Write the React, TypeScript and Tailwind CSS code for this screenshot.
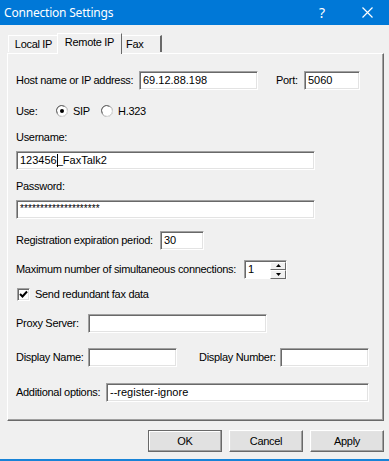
import React from "react";

const font = { fontFamily: '"Liberation Sans", Arial, sans-serif' };

function Field({ w, children, className = "" }: { w: string; children?: React.ReactNode; className?: string }) {
  return (
    <div
      className={`${w} shrink-0 h-[19px] bg-white border border-t-[#a0a0a0] border-l-[#a0a0a0] border-r-white border-b-white shadow-[inset_1px_1px_0_#696969,inset_-1px_-1px_0_#e3e3e3] flex items-center pl-[3px] text-[11px] text-black leading-none whitespace-nowrap overflow-hidden ${className}`}
    >
      {children}
    </div>
  );
}

function Label({ w, children, className = "" }: { w: string; children: React.ReactNode; className?: string }) {
  return <span className={`${w} shrink-0 whitespace-nowrap tracking-[-0.3px] ${className}`}>{children}</span>;
}

function Radio({ checked }: { checked?: boolean }) {
  return (
    <svg width="12" height="12" viewBox="0 0 12 12" className="shrink-0">
      <circle cx="6" cy="6" r="5.5" fill="#fff" stroke="#a0a0a0" />
      <path d="M1.5 8.5 A5 5 0 0 1 8.5 1.5" fill="none" stroke="#696969" strokeWidth="1" />
      <path d="M10.5 3.5 A5 5 0 0 1 3.5 10.5" fill="none" stroke="#e3e3e3" strokeWidth="1" />
      {checked && <circle cx="6" cy="6" r="2" fill="#000" />}
    </svg>
  );
}

function Button({ label, def }: { label: string; def?: boolean }) {
  return (
    <div
      className={`w-[74px] h-[22px] flex items-center justify-center text-[11px] text-black bg-[#e1e1e1] border ${
        def
          ? "border-[#696969] shadow-[inset_-1px_-1px_0_#a0a0a0,inset_1px_1px_0_#fff]"
          : "border-t-white border-l-white border-r-[#696969] border-b-[#696969] shadow-[inset_-1px_-1px_0_#a0a0a0,inset_1px_1px_0_#e3e3e3]"
      }`}
    >
      {label}
    </div>
  );
}

export default function App() {
  return (
    <div className="w-[389px] h-[461px] bg-[#f0f0f0] flex flex-col overflow-hidden text-black" style={font}>
      {/* Title bar */}
      <div className="h-[25px] bg-[#0078d7] flex items-center text-white shrink-0">
        <span className="pl-[4px] text-[12px] tracking-[-0.2px]" style={{ fontFamily: '"Noto Sans", "Open Sans", sans-serif' }}>
          Connection Settings
        </span>
        <span className="ml-auto mr-[37px] text-[14px]" style={{ fontFamily: '"Noto Sans", sans-serif' }}>
          ?
        </span>
        <svg width="11" height="11" viewBox="0 0 11 11" className="mr-[16px]">
          <path d="M0.5 0.5 L10.5 10.5 M10.5 0.5 L0.5 10.5" stroke="#fff" strokeWidth="1.2" />
        </svg>
      </div>

      {/* Tabs */}
      <div className="flex items-end h-[21px] mt-[7px] pl-[8px] shrink-0 relative z-10 text-[11px] tracking-[-0.3px]">
        <div className="w-[50px] h-[17px] border-t border-l border-white flex items-center justify-center mb-px">
          Local IP
        </div>
        <div className="w-[65px] h-[21px] -mb-px bg-[#f0f0f0] border-t border-l border-white border-r border-r-[#696969] flex items-center justify-center -ml-px pb-[3px]">
          Remote IP
        </div>
        <div className="w-[40px] h-[17px] border-t border-white border-r-2 border-r-[#696969] flex items-center pl-[4px] mb-px">
          Fax
        </div>
      </div>

      {/* Panel */}
      <div className="ml-[7px] w-[377px] h-[368px] border-t border-l border-white border-r border-b border-r-[#696969] border-b-[#696969] shadow-[inset_-1px_-1px_0_#a0a0a0] pl-[8px] pt-[17px] flex flex-col text-[11px] shrink-0">
        {/* Host */}
        <div className="flex items-center h-[19px]">
          <Label w="w-[123px]">Host name or IP address:</Label>
          <Field w="w-[119px]">69.12.88.198</Field>
          <Label w="w-[28px]" className="ml-[18px]">Port:</Label>
          <Field w="w-[56px]">5060</Field>
        </div>

        {/* Use */}
        <div className="flex items-center h-[16px] mt-[13px]">
          <Label w="w-[40px]">Use:</Label>
          <Radio checked />
          <Label w="w-[28px]" className="ml-[5px]">SIP</Label>
          <Radio />
          <Label w="w-[40px]" className="ml-[5px]">H.323</Label>
        </div>

        {/* Username */}
        <div className="h-[14px] mt-[11px] flex items-center tracking-[-0.3px]">Username:</div>
        <div className="mt-[7px]">
          <Field w="w-[299px]">
            123456
            <span className="inline-block w-px h-[13px] bg-black -mr-px" />
            _FaxTalk2
          </Field>
        </div>

        {/* Password */}
        <div className="h-[14px] mt-[9px] flex items-center tracking-[-0.3px]">Password:</div>
        <div className="mt-[7px]">
          <Field w="w-[299px]">
            <span className="text-[10px] tracking-[0.1px] -mt-[2px]">********************</span>
          </Field>
        </div>

        {/* Registration */}
        <div className="flex items-center h-[19px] mt-[12px]">
          <Label w="w-[144px]">Registration expiration period:</Label>
          <Field w="w-[44px]">30</Field>
        </div>

        {/* Max connections */}
        <div className="flex items-center h-[19px] mt-[10px]">
          <Label w="w-[228px]">Maximum number of simultaneous connections:</Label>
          <div className="w-[43px] shrink-0 h-[19px] bg-white border border-t-[#a0a0a0] border-l-[#a0a0a0] border-r-white border-b-white shadow-[inset_1px_1px_0_#696969] flex items-center pl-[3px]">
            <span className="flex-1">1</span>
            <div className="flex flex-col w-[16px] h-[17px] mt-px">
              <div className="h-[8px] bg-[#f0f0f0] border-t border-l border-white border-r border-b border-r-[#696969] border-b-[#696969] flex items-center justify-center">
                <svg width="5" height="3" viewBox="0 0 5 3">
                  <path d="M0 3 L2.5 0 L5 3 Z" fill="#000" />
                </svg>
              </div>
              <div className="h-[9px] bg-[#f0f0f0] border-t border-l border-white border-r border-b border-r-[#696969] border-b-[#696969] flex items-center justify-center">
                <svg width="5" height="3" viewBox="0 0 5 3">
                  <path d="M0 0 L2.5 3 L5 0 Z" fill="#000" />
                </svg>
              </div>
            </div>
          </div>
        </div>

        {/* Checkbox */}
        <div className="flex items-center h-[13px] mt-[9px]">
          <div className="w-[13px] h-[13px] shrink-0 bg-white border border-t-[#a0a0a0] border-l-[#a0a0a0] border-r-white border-b-white shadow-[inset_1px_1px_0_#696969,inset_-1px_-1px_0_#e3e3e3] flex items-center justify-center ml-px">
            <svg width="9" height="9" viewBox="0 0 9 9">
              <path d="M1 4 L3.5 6.5 L8 1.5" fill="none" stroke="#000" strokeWidth="2" />
            </svg>
          </div>
          <Label w="w-[150px]" className="ml-[5px]">Send redundant fax data</Label>
        </div>

        {/* Proxy */}
        <div className="flex items-center h-[19px] mt-[13px]">
          <Label w="w-[72px]">Proxy Server:</Label>
          <Field w="w-[179px]" />
        </div>

        {/* Display */}
        <div className="flex items-center h-[19px] mt-[15px]">
          <Label w="w-[72px]">Display Name:</Label>
          <Field w="w-[89px]" />
          <Label w="w-[81px]" className="ml-[22px]">Display Number:</Label>
          <Field w="w-[89px]" />
        </div>

        {/* Additional */}
        <div className="flex items-center h-[19px] mt-[16px]">
          <Label w="w-[90px]">Additional options:</Label>
          <Field w="w-[263px]">--register-ignore</Field>
        </div>
      </div>

      {/* Buttons */}
      <div className="flex mt-[9px] pl-[148px] gap-[7px] shrink-0 tracking-[-0.3px]">
        <Button label="OK" def />
        <Button label="Cancel" />
        <Button label="Apply" />
      </div>

      <div className="mt-auto h-[2px] bg-[#1883d7] shrink-0" />
    </div>
  );
}
